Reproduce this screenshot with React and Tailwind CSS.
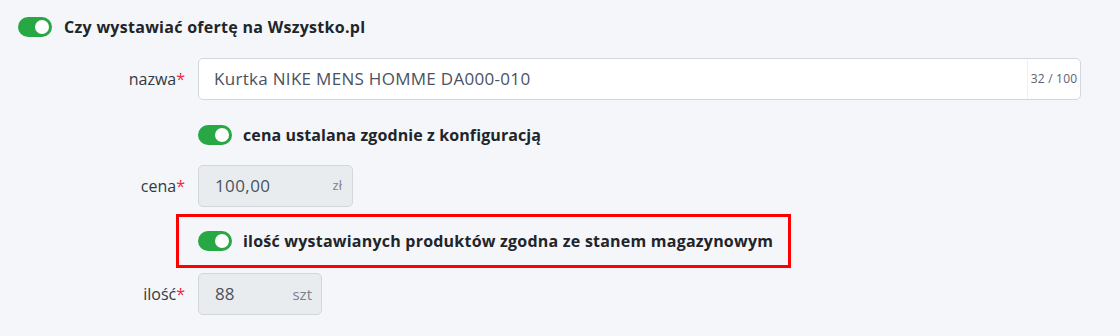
import React from "react";

function Toggle() {
  return (
    <div className="relative w-[34px] h-[20px] rounded-full bg-[#28a745] shrink-0">
      <div className="absolute right-[3px] top-[3px] w-[14px] h-[14px] rounded-full bg-white" />
    </div>
  );
}

function Label({ children }) {
  return (
    <div className="w-[185px] text-right text-[16px] text-[#333a40] leading-none shrink-0">
      {children}
      <span className="text-[#f0283c]">*</span>
    </div>
  );
}

export default function App() {
  return (
    <div
      className="w-[1120px] h-[336px] bg-[#f4f6fa] flex flex-col"
      style={{ fontFamily: "'Open Sans', sans-serif" }}
    >
      <div className="mt-[17px] ml-[18px] flex items-center h-[20px] gap-[12px]">
        <Toggle />
        <span className="text-[16px] font-bold tracking-[0.28px] text-[#212529]">Czy wystawiać ofertę na Wszystko.pl</span>
      </div>

      <div className="mt-[21px] flex items-center h-[42px]">
        <Label>nazwa</Label>
        <div className="ml-[13px] w-[883px] h-[42px] flex bg-white border border-[#d3d7dd] rounded-[5px] overflow-hidden">
          <div className="flex-1 flex items-center pl-[15px] text-[17px] tracking-[0.3px] text-[#4a5260]">
            Kurtka NIKE MENS HOMME DA000-010
          </div>
          <div className="w-[53px] border-l border-[#eef0f3] flex items-center justify-center text-[12px] tracking-[0.2px] text-[#5a6270]">
            32 / 100
          </div>
        </div>
      </div>

      <div className="mt-[25px] ml-[198px] flex items-center h-[20px] gap-[11px]">
        <Toggle />
        <span className="text-[16px] font-bold tracking-[0.1px] text-[#212529]">cena ustalana zgodnie z konfiguracją</span>
      </div>

      <div className="mt-[20px] flex items-center h-[42px]">
        <Label>cena</Label>
        <div className="ml-[13px] w-[155px] h-[42px] flex items-center justify-between pl-[16px] pr-[10px] bg-[#e9ecef] border border-[#d3d7dd] rounded-[5px]">
          <span className="text-[17px] tracking-[0.4px] text-[#4a5260]">100,00</span>
          <span className="text-[13px] text-[#7a8190]">zł</span>
        </div>
      </div>

      <div className="mt-[7px] flex">
        <div className="w-[176px] shrink-0" />
        <div className="h-[54px] border-[3px] border-[#ff0000] flex items-center pl-[19px] pr-[15px] gap-[11px]">
          <Toggle />
          <span className="text-[16px] font-bold tracking-[0.22px] text-[#212529]">
            ilość wystawianych produktów zgodna ze stanem magazynowym
          </span>
        </div>
      </div>

      <div className="mt-[5px] flex items-center h-[42px]">
        <Label>ilość</Label>
        <div className="ml-[13px] w-[124px] h-[42px] flex items-center justify-between pl-[16px] pr-[9px] bg-[#e9ecef] border border-[#d3d7dd] rounded-[5px]">
          <span className="text-[17px] text-[#4a5260]">88</span>
          <span className="text-[15px] text-[#7a8190]">szt</span>
        </div>
      </div>
    </div>
  );
}
